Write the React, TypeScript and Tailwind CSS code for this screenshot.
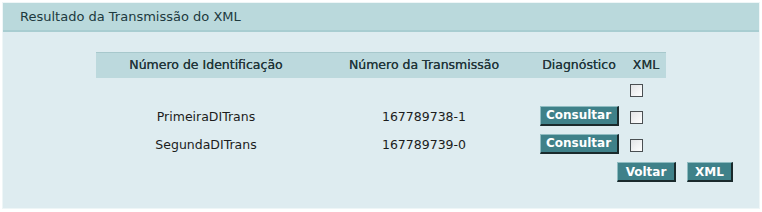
const font = "font-['Tahoma','DejaVu_Sans',sans-serif]"

function Button({ label, w }: { label: string; w: string }) {
  return (
    <button
      className={`${w} h-[20px] bg-[#3f8189] text-white font-bold text-[12px] leading-none border border-t-[#8fbcc1] border-l-[#8fbcc1] border-r-[#1a2a2c] border-b-[#1a2a2c] border-r-2 border-b-2`}
    >
      {label}
    </button>
  )
}

function Check() {
  return (
    <span className="block w-[13px] h-[13px] border border-[#4a4f52] bg-gradient-to-br from-[#e2e4e6] to-white" />
  )
}

export default function App() {
  const rows = [
    { id: "PrimeiraDITrans", num: "167789738-1" },
    { id: "SegundaDITrans", num: "167789739-0" },
  ]

  return (
    <div className={`w-[762px] h-[212px] bg-white p-[2px] ${font}`}>
      <div className="h-[207px] border border-[#eef6f7] bg-[#deecf0] flex flex-col">
        <div className="h-[29px] bg-[#bad9dc] border-b-2 border-b-[#a8cdd1] flex items-center pl-[17px] text-[13px] text-[#203a3e]">
          Resultado da Transmissão do XML
        </div>
        <div className="pt-[20px] pl-[93px]">
          <div className="w-[570px] text-[12.5px] text-[#1c1c1c]">
            <div className="h-[26px] bg-[#bcd9dd] border-t border-t-[#a7c8cc] flex items-center text-[#22363a] [text-shadow:0_0_0.3px_#22363a]">
              <div className="w-[220px] text-center">Número de Identificação</div>
              <div className="w-[216px] text-center">Número da Transmissão</div>
              <div className="w-[94px] text-center">Diagnóstico</div>
              <div className="w-[40px] text-center">XML</div>
            </div>
            <div className="h-[25px] flex items-center">
              <div className="w-[530px]" />
              <div className="w-[40px] pl-[4px]">
                <Check />
              </div>
            </div>
            {rows.map((r) => (
              <div key={r.id} className="h-[28px] flex items-center">
                <div className="w-[220px] text-center">{r.id}</div>
                <div className="w-[216px] text-center">{r.num}</div>
                <div className="w-[94px] flex justify-center pb-[3px]">
                  <Button label="Consultar" w="w-[79px]" />
                </div>
                <div className="w-[40px] pl-[4px]">
                  <Check />
                </div>
              </div>
            ))}
          </div>
          <div className="flex justify-end gap-[11px] pr-[26px] mt-[3px]">
            <Button label="Voltar" w="w-[59px]" />
            <Button label="XML" w="w-[46px]" />
          </div>
        </div>
      </div>
    </div>
  )
}
